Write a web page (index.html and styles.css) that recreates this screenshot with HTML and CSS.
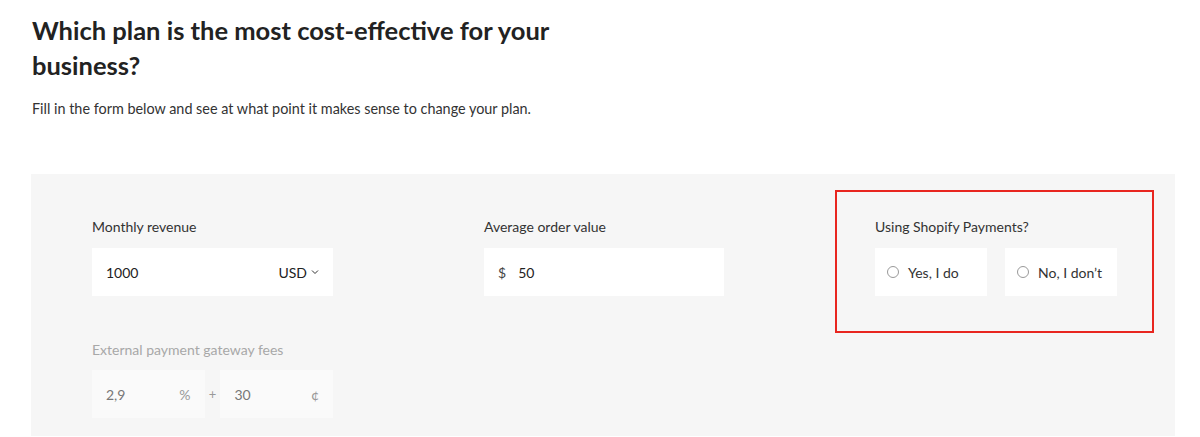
FILE: index.html
```html
<!DOCTYPE html>
<html lang="en">
<head>
    <meta charset="UTF-8">
    <meta name="viewport" content="width=device-width, initial-scale=1.0">
    <title>Plan calculator</title>
    <link rel="stylesheet" href="styles.css">
</head>
<body>
    <div class="intro">
        <h1>Which plan is the most cost-effective for your business?</h1>
        <p>Fill in the form below and see at what point it makes sense to change your plan.</p>
    </div>

    <form class="calc">
        <div class="field">
            <label>Monthly revenue</label>
            <div class="box">
                <span class="value">1000</span>
                <span class="currency">USD
                    <svg width="8" height="6" viewBox="0 0 8 6"><path d="M1 1.5 L4 4.5 L7 1.5" fill="none" stroke="#333" stroke-width="1"/></svg>
                </span>
            </div>
        </div>

        <div class="field">
            <label>Average order value</label>
            <div class="box">
                <span class="prefix">$</span>
                <span class="value">50</span>
            </div>
        </div>

        <div class="field highlighted">
            <label>Using Shopify Payments?</label>
            <div class="choices">
                <div class="box choice"><span class="radio"></span>Yes, I do</div>
                <div class="box choice"><span class="radio"></span>No, I don’t</div>
            </div>
        </div>

        <div class="field disabled">
            <label>External payment gateway fees</label>
            <div class="fees">
                <div class="box small"><span class="value">2,9</span><span class="unit">%</span></div>
                <span class="plus">+</span>
                <div class="box small"><span class="value">30</span><span class="unit">¢</span></div>
            </div>
        </div>
    </form>
</body>
</html>
```

FILE: styles.css
```css
body {
    font-family: Lato, "Liberation Sans", sans-serif;
    margin: 0;
    background: #fff;
    color: #222;
}
.intro {
    padding: 13px 32px 0 32px;
}
h1 {
    font-size: 25.5px;
    font-weight: 700;
    line-height: 35px;
    max-width: 560px;
    margin: 0;
    color: #222;
}
.intro p {
    font-size: 14.4px;
    color: #333;
    margin: 17px 0 0 0;
}
.calc {
    margin: 57px 25px 0 31px;
    background: #f6f6f6;
    padding: 44px 0 18px 61px;
    display: grid;
    grid-template-columns: 241px 240px 242px;
    column-gap: 151px;
    row-gap: 45px;
}
.field label {
    display: block;
    font-size: 14px;
    color: #333;
    margin-bottom: 13px;
}
.disabled label {
    color: #a8a8a8;
    margin-bottom: 12px;
}
.box {
    background: #fff;
    height: 48px;
    display: flex;
    align-items: center;
    padding: 0 14px;
    box-sizing: border-box;
    font-size: 14px;
    color: #222;
}
.value {
    flex: 1;
}
.prefix {
    margin-right: 12px;
    color: #444;
}
.currency {
    display: flex;
    align-items: center;
    gap: 4px;
}
.highlighted {
    position: relative;
}
.highlighted::after {
    content: "";
    position: absolute;
    left: -40px;
    right: -37px;
    top: -28px;
    bottom: -37px;
    border: 2px solid #e8261f;
}
.choices {
    display: flex;
    gap: 18px;
}
.choice {
    width: 112px;
    padding: 0 12px;
    color: #333;
}
.radio {
    width: 10px;
    height: 10px;
    border: 1px solid #999;
    border-radius: 50%;
    margin-right: 9px;
}
.fees {
    display: flex;
    align-items: center;
}
.box.small {
    width: 113px;
    background: #fafafa;
    color: #777;
}
.unit {
    color: #999;
}
.plus {
    width: 16px;
    text-align: center;
    color: #999;
    font-size: 13px;
}
```
